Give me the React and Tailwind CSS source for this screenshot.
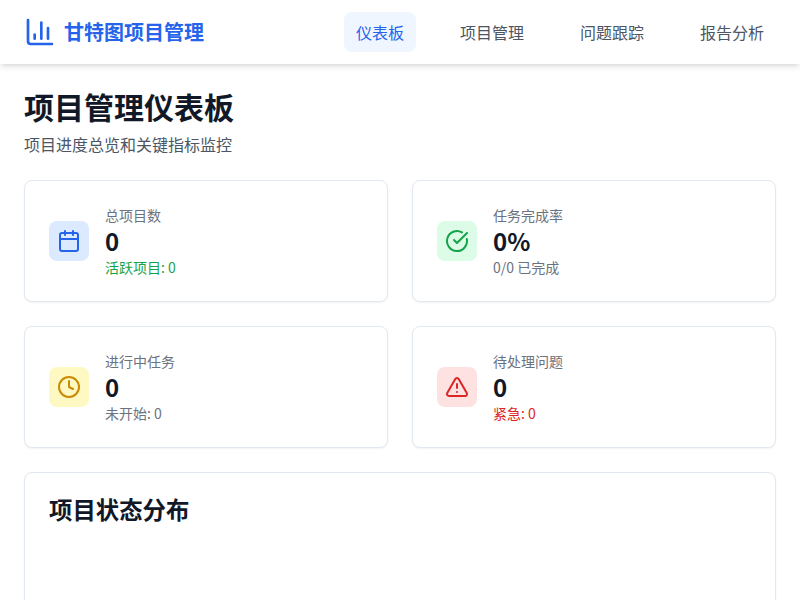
import { Calendar, ChartColumn, CircleCheckBig, Clock, TriangleAlert } from 'lucide-react'

const navItems = ['仪表板', '项目管理', '问题跟踪', '报告分析']

const stats = [
  {
    label: '总项目数',
    value: '0',
    note: '活跃项目: 0',
    noteClass: 'text-[#16a34a]',
    iconBox: 'bg-[#dbeafe] text-[#2563eb]',
    Icon: Calendar,
  },
  {
    label: '任务完成率',
    value: '0%',
    note: '0/0 已完成',
    noteClass: 'text-[#6b7280]',
    iconBox: 'bg-[#dcfce7] text-[#16a34a]',
    Icon: CircleCheckBig,
  },
  {
    label: '进行中任务',
    value: '0',
    note: '未开始: 0',
    noteClass: 'text-[#6b7280]',
    iconBox: 'bg-[#fef9c3] text-[#ca8a04]',
    Icon: Clock,
  },
  {
    label: '待处理问题',
    value: '0',
    note: '紧急: 0',
    noteClass: 'text-[#dc2626]',
    iconBox: 'bg-[#fee2e2] text-[#dc2626]',
    Icon: TriangleAlert,
  },
]

export default function App() {
  return (
    <div className="h-[600px] overflow-hidden bg-white font-['Noto_Sans_CJK_SC',sans-serif]">
      <header className="relative flex h-16 items-center justify-between bg-white px-6 shadow-md">
        <div className="flex items-center gap-2">
          <ChartColumn size={32} className="text-[#2563eb]" />
          <span className="text-xl font-bold text-[#2563eb]">甘特图项目管理</span>
        </div>
        <nav className="flex gap-8">
          {navItems.map((item, index) => (
            <a
              key={item}
              className={`rounded-lg px-3 py-2 text-base leading-6 ${
                index === 0 ? 'bg-[#eff6ff] text-[#2563eb]' : 'text-[#4b5563]'
              }`}
            >
              {item}
            </a>
          ))}
        </nav>
      </header>

      <main className="p-6">
        <div className="mb-6">
          <h1 className="mb-2 text-3xl font-bold text-[#111827]">项目管理仪表板</h1>
          <p className="text-base text-[#4b5563]">项目进度总览和关键指标监控</p>
        </div>

        <div className="mb-6 grid grid-cols-2 gap-6">
          {stats.map(({ label, value, note, noteClass, iconBox, Icon }) => (
            <div
              key={label}
              className="flex items-center gap-4 rounded-lg border border-[#e2e8f0] bg-white p-6 shadow-[0_1px_2px_rgba(0,0,0,0.05)]"
            >
              <div className={`flex h-10 w-10 items-center justify-center rounded-lg ${iconBox}`}>
                <Icon size={24} />
              </div>
              <div>
                <p className="text-sm text-[#6b7280]">{label}</p>
                <p className="text-2xl font-bold text-[#111827]">{value}</p>
                <p className={`text-sm ${noteClass}`}>{note}</p>
              </div>
            </div>
          ))}
        </div>

        <div className="h-[300px] rounded-lg border border-[#e2e8f0] bg-white p-6 shadow-[0_1px_2px_rgba(0,0,0,0.05)]">
          <h2 className="text-[23.4px] leading-[24px] font-bold text-[#111827]">项目状态分布</h2>
        </div>
      </main>
    </div>
  )
}
